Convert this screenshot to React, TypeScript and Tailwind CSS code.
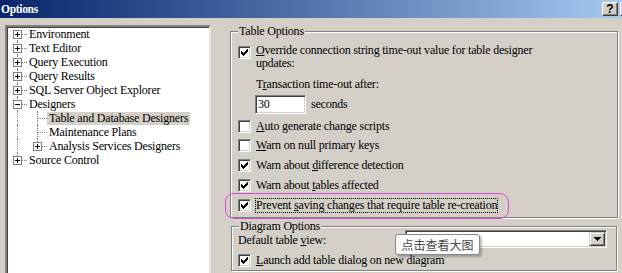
import React from 'react'

type V = 'full' | 'top' | 'bottom' | 'none'

function Expander({ open }: { open?: boolean }) {
  return (
    <svg width="9" height="9" viewBox="0 0 9 9" className="absolute left-[6px] top-[3px]" shapeRendering="crispEdges">
      <rect x="0.5" y="0.5" width="8" height="8" fill="#fff" stroke="#808080" />
      <rect x="2" y="4" width="5" height="1" fill="#000" />
      {!open && <rect x="4" y="2" width="1" height="5" fill="#000" />}
    </svg>
  )
}

function Cell({ v = 'none', h = false, box }: { v?: V; h?: boolean; box?: '+' | '-' }) {
  return (
    <div className="relative w-[20px] h-full shrink-0">
      {v === 'full' && <div className="absolute left-[10px] top-0 bottom-0 border-l border-dotted border-[#808080]" />}
      {v === 'top' && <div className="absolute left-[10px] top-0 h-[7px] border-l border-dotted border-[#808080]" />}
      {v === 'bottom' && <div className="absolute left-[10px] top-[7px] bottom-0 border-l border-dotted border-[#808080]" />}
      {h && <div className="absolute left-[10px] right-0 top-[7px] border-t border-dotted border-[#808080]" />}
      {box && <Expander open={box === '-'} />}
    </div>
  )
}

function TreeRow({ cells, label, selected }: { cells: React.ReactNode; label: string; selected?: boolean }) {
  return (
    <div className="flex h-[14px] items-center">
      {cells}
      <span className={`px-[2px] leading-[13px] whitespace-nowrap ${selected ? 'bg-[#d4d0c8]' : ''}`}>{label}</span>
    </div>
  )
}

function Check({ checked }: { checked?: boolean }) {
  return (
    <div className="w-[13px] h-[13px] shrink-0 bg-white border border-t-[#808080] border-l-[#808080] border-b-white border-r-white shadow-[inset_1px_1px_0_#404040,inset_-1px_-1px_0_#d4d0c8] flex items-center justify-center">
      {checked && (
        <svg width="7" height="7" viewBox="0 0 7 7" shapeRendering="crispEdges">
          <rect x="6" y="0" width="1" height="1" />
          <rect x="5" y="1" width="2" height="1" />
          <rect x="0" y="2" width="1" height="1" />
          <rect x="4" y="2" width="3" height="1" />
          <rect x="0" y="3" width="2" height="1" />
          <rect x="3" y="3" width="3" height="1" />
          <rect x="0" y="4" width="5" height="1" />
          <rect x="1" y="5" width="3" height="1" />
          <rect x="2" y="6" width="1" height="1" />
        </svg>
      )}
    </div>
  )
}

function U({ children }: { children: React.ReactNode }) {
  return <span className="underline underline-offset-[1px]">{children}</span>
}

function CheckRow({ checked, h, children }: { checked?: boolean; h: string; children: React.ReactNode }) {
  return (
    <div className={`flex items-center ${h}`}>
      <Check checked={checked} />
      <span className="ml-[5px] leading-[13px] whitespace-nowrap">{children}</span>
    </div>
  )
}

export default function App() {
  return (
    <div className="w-[622px] h-[273px] overflow-hidden bg-[#d4d0c8] text-black text-[12px] tracking-[-0.2px] font-['Liberation_Serif','Noto_Sans_CJK_SC',serif]">
      {/* title bar */}
      <div className="h-[18px] flex items-center justify-between bg-linear-to-r from-[#0a246a] to-[#a6caf0]">
        <span className="pl-[1px] text-white font-bold text-[11.5px] tracking-[-0.3px] leading-[13px]">Options</span>
        <div className="flex gap-[2px] mr-[-14px]">
          <div className="w-[16px] h-[14px] bg-[#d4d0c8] border border-t-white border-l-white border-b-[#404040] border-r-[#404040] shadow-[inset_-1px_-1px_0_#808080] flex items-center justify-center font-bold text-[12px] leading-none tracking-normal font-['Liberation_Sans',sans-serif]">?</div>
          <div className="w-[16px] h-[14px] bg-[#d4d0c8] border border-t-white border-l-white border-b-[#404040] border-r-[#404040] shadow-[inset_-1px_-1px_0_#808080]" />
        </div>
      </div>

      <div className="flex pl-[5px] pt-[7px]">
        {/* tree */}
        <div className="w-[206px] h-[260px] shrink-0 bg-white border-2 border-t-[#808080] border-l-[#808080] border-b-white border-r-[#e8e6e0] shadow-[inset_1px_1px_0_#404040]">
          <TreeRow cells={<Cell v="bottom" h box="+" />} label="Environment" />
          <TreeRow cells={<Cell v="full" h box="+" />} label="Text Editor" />
          <TreeRow cells={<Cell v="full" h box="+" />} label="Query Execution" />
          <TreeRow cells={<Cell v="full" h box="+" />} label="Query Results" />
          <TreeRow cells={<Cell v="full" h box="+" />} label="SQL Server Object Explorer" />
          <TreeRow cells={<Cell v="full" h box="-" />} label="Designers" />
          <TreeRow cells={<><Cell v="full" /><Cell v="full" h /></>} label="Table and Database Designers" selected />
          <TreeRow cells={<><Cell v="full" /><Cell v="full" h /></>} label="Maintenance Plans" />
          <TreeRow cells={<><Cell v="full" /><Cell v="top" h box="+" /></>} label="Analysis Services Designers" />
          <TreeRow cells={<Cell v="top" h box="+" />} label="Source Control" />
        </div>

        {/* options */}
        <div className="ml-[19px] w-[389px] flex flex-col">
          <fieldset className="w-[388px] border border-[#808080] shadow-[inset_1px_1px_0_#fff,1px_1px_0_#fff] pl-[7px] pb-[2px]">
            <legend className="px-[1px] leading-[13px] bg-[#d4d0c8]">Table Options</legend>
            <div className="mt-[6px] flex items-start">
              <div className="mt-[2px]"><Check checked /></div>
              <span className="ml-[5px] leading-[13px] whitespace-nowrap">
                <U>O</U>verride connection string time-out value for table designer
                <br />
                updates:
              </span>
            </div>
            <div className="mt-[8px] pl-[18px] leading-[13px]">T<U>r</U>ansaction time-out after:</div>
            <div className="mt-[4px] pl-[17px] flex items-center">
              <div className="w-[51px] h-[19px] bg-white border border-t-[#808080] border-l-[#808080] border-b-white border-r-white shadow-[inset_1px_1px_0_#404040,inset_-1px_-1px_0_#d4d0c8] pl-[2px] leading-[17px]">30</div>
              <span className="ml-[5px] leading-[13px]">seconds</span>
            </div>
            <div className="mt-[3px]">
              <CheckRow h="h-[19px]"><U>A</U>uto generate change scripts</CheckRow>
              <CheckRow h="h-[19px]"><U>W</U>arn on null primary keys</CheckRow>
              <CheckRow h="h-[20px]" checked>Warn about <U>d</U>ifference detection</CheckRow>
              <CheckRow h="h-[20px]" checked>Warn about <U>t</U>ables affected</CheckRow>
              <div className="relative flex items-center h-[20px]">
                <Check checked />
                <span className="ml-[4px] leading-[13px] whitespace-nowrap border border-dotted border-black">
                  Prevent <U>s</U>aving changes that require table re-creation
                </span>
                <div className="absolute left-[-13px] top-[-2px] w-[284px] h-[26px] rounded-[9px] border-[1.5px] border-[#dc48dc]" />
              </div>
            </div>
          </fieldset>

          <fieldset className="relative mt-[2px] ml-[1px] w-[386px] border border-[#808080] shadow-[inset_1px_1px_0_#fff,1px_1px_0_#fff] pl-[6px] pr-[9px]">
            <legend className="ml-[1px] px-[1px] leading-[12px] bg-[#d4d0c8]">Diagram Options</legend>
            <div className="mt-[-2px] h-[18px] flex items-center justify-between">
              <span className="mt-[2px] leading-[10px]">Default table <U>v</U>iew:</span>
              <div className="w-[202px] h-[18px] bg-white border border-t-[#808080] border-l-[#808080] border-b-white border-r-white shadow-[inset_1px_1px_0_#404040,inset_-1px_-1px_0_#d4d0c8] flex justify-end p-[1px]">
                <div className="w-[16px] h-full bg-[#d4d0c8] border border-t-[#d4d0c8] border-l-[#d4d0c8] border-b-[#404040] border-r-[#404040] shadow-[inset_1px_1px_0_#fff,inset_-1px_-1px_0_#808080] flex items-center justify-center">
                  <svg width="7" height="4" viewBox="0 0 7 4" shapeRendering="crispEdges">
                    <path d="M0 0h7v1h-1v1h-1v1h-1v1h-1v-1h-1v-1h-1v-1h-1z" fill="#000" />
                  </svg>
                </div>
              </div>
            </div>
            <div className="mt-[3px]">
              <CheckRow h="h-[19px]" checked><U>L</U>aunch add table dialog on new diagram</CheckRow>
            </div>
            {/* tooltip */}
            <div className="absolute left-[163px] top-[2px] w-[85px] h-[21px] rounded-[3px] border border-[#8a8a8a] bg-[#fbfbfb] shadow-[2px_2px_2px_rgba(0,0,0,0.25)] flex items-center justify-center text-[12px] leading-none tracking-normal text-[#4a4a4a] font-['Noto_Sans_CJK_SC',sans-serif]">
              点击查看大图
            </div>
          </fieldset>
        </div>
      </div>
    </div>
  )
}
